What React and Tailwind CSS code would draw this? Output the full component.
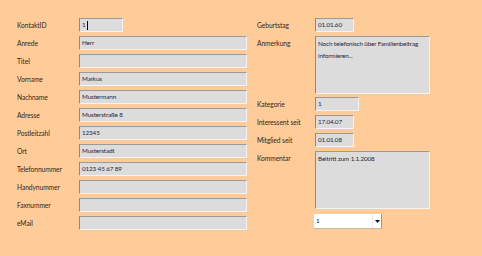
import React from "react";

const font = { fontFamily: "Lato, 'Liberation Sans', sans-serif" };

function Field({ value, className = "", children }) {
  return (
    <div
      className={`bg-[#dcdcdc] border-t border-l border-t-[#9a9a9a] border-l-[#8a8a8a] border-b border-r border-b-[#f4f4f4] border-r-[#f4f4f4] pl-[2px] text-[6.3px] tracking-[-0.12px] leading-[12px] text-[#26263a] overflow-hidden ${className}`}
    >
      {value}
      {children}
    </div>
  );
}

function Row({ label, children, className = "", labelW = "w-[62px]" }) {
  return (
    <div className={`flex items-start ${className}`}>
      <div className={`${labelW} shrink-0 h-[14px] leading-[14px] text-[6.7px] tracking-[-0.08px] text-[#33261a]`}>{label}</div>
      {children}
    </div>
  );
}

export default function App() {
  const left = [
    ["Anrede", "Herr"],
    ["Titel", ""],
    ["Vorname", "Markus"],
    ["Nachname", "Mustermann"],
    ["Adresse", "Musterstraße 8"],
    ["Postleitzahl", "12345"],
    ["Ort", "Musterstadt"],
    ["Telefonnummer", "0123 45 67 89"],
    ["Handynummer", ""],
    ["Faxnummer", ""],
    ["eMail", ""],
  ];
  return (
    <div className="w-[482px] h-[256px] bg-[#ffcc99] flex pt-[18px]" style={font}>
      <div className="pl-[17px] w-[257px] flex flex-col gap-[4px]">
        <Row label="KontaktID">
          <Field className="w-[44px] h-[14px]">
            1<span className="inline-block w-px h-[9px] bg-black align-middle ml-[1px]" />
          </Field>
        </Row>
        {left.map(([l, v]) => (
          <Row key={l} label={l}>
            <Field value={v} className="w-[168px] h-[14px]" />
          </Row>
        ))}
      </div>
      <div className="flex flex-col">
        <Row label="Geburtstag" labelW="w-[58px]">
          <Field value="01.01.60" className="w-[39px] h-[14px]" />
        </Row>
        <Row label="Anmerkung" labelW="w-[58px]" className="mt-[4px]">
          <Field className="w-[115px] h-[58px] leading-[8px] pt-[1px] pr-[1px]">
            Noch telefonisch über Familienbeitrag informieren...
          </Field>
        </Row>
        <Row label="Kategorie" labelW="w-[58px]" className="mt-[3px]">
          <Field value="1" className="w-[44px] h-[14px]" />
        </Row>
        <Row label="Interessent seit" labelW="w-[58px]" className="mt-[4px]">
          <Field value="17.04.07" className="w-[39px] h-[14px]" />
        </Row>
        <Row label="Mitglied seit" labelW="w-[58px]" className="mt-[4px]">
          <Field value="01.01.08" className="w-[39px] h-[14px]" />
        </Row>
        <Row label="Kommentar" labelW="w-[58px]" className="mt-[4px]">
          <Field className="w-[115px] h-[58px] leading-[8px] pt-[1px]">Beitritt zum 1.1.2008</Field>
        </Row>
        <div className="mt-[5px] ml-[57px] w-[68px] h-[15px] bg-white flex items-center border-r border-b border-r-[#9a9a9a] border-b-[#c8b8a0]">
          <span className="flex-1 pl-[2px] text-[6.3px] text-[#222]">1</span>
          <span className="w-[9px] h-full flex items-center justify-center border-l border-l-[#e8e8e8]">
            <svg width="5" height="3" viewBox="0 0 5 3"><path d="M0 0h5L2.5 3z" fill="#111" /></svg>
          </span>
        </div>
      </div>
    </div>
  );
}
